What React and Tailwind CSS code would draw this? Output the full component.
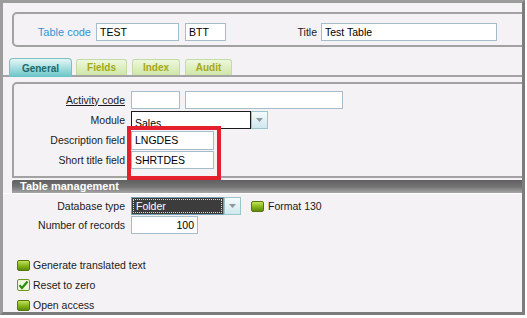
import React from "react";

const inputCls =
  "h-[18px] bg-white border border-[#a7bccb] px-[3px] flex items-center text-[10.5px] leading-none text-black";

function Field({ label, underline, children }) {
  return (
    <div className="flex items-center h-[18px]">
      <div className="w-[112px] pr-[1px] text-right leading-none">
        <span className={underline ? "underline" : ""}>{label}</span>
      </div>
      <div className="ml-[5px] flex items-center">{children}</div>
    </div>
  );
}

function GreenBox({ checked }) {
  if (checked) {
    return (
      <svg width="13" height="12" viewBox="0 0 13 12" className="shrink-0">
        <rect x="0.5" y="0.5" width="12" height="11" rx="1.5" fill="#eef6de" stroke="#6b9a1e" />
        <path d="M2.5 6.2 L5 9 L10.5 2.5" fill="none" stroke="#2f8a12" strokeWidth="2.2" />
      </svg>
    );
  }
  return (
    <div className="w-[13px] h-[11px] shrink-0 rounded-[2px] border border-[#56760e] bg-gradient-to-b from-[#c4e25a] via-[#8ab81e] to-[#5e8c0c]" />
  );
}

function DropButton() {
  return (
    <div className="w-[17px] h-[18px] border border-[#9cc4cc] bg-gradient-to-b from-[#f4fbfc] to-[#cfe8ee] flex items-center justify-center">
      <svg width="7" height="4" viewBox="0 0 7 4">
        <path d="M0 0 H7 L3.5 4 Z" fill="#8a9aa0" />
      </svg>
    </div>
  );
}

function Tab({ label, active }) {
  if (active) {
    return (
      <div className="w-[63px] h-[19px] -mb-[2px] rounded-t-[4px] border border-b-0 border-[#7cc0c4] bg-gradient-to-b from-[#e6f6f6] via-[#a6dede] to-[#66c4c6] flex items-center justify-center text-[10px] font-bold text-[#1c6a6c]">
        {label}
      </div>
    );
  }
  return (
    <div className="h-[16px] rounded-t-[3px] border border-b-0 border-[#c2dca6] bg-gradient-to-b from-[#eef7dc] to-[#cfe6a8] flex items-center justify-center text-[10px] font-bold text-[#a5a816]">
      {label}
    </div>
  );
}

export default function App() {
  return (
    <div className="w-[527px] h-[318px] bg-white font-['Liberation_Sans',Arial,sans-serif] text-[10.5px] text-[#1a1a1a]">
      <div className="relative w-[525px] h-[315px] border-[3px] border-[#9c9c9c] border-r-[#7c7c7c] border-b-[#7c7c7c] bg-[#f5f2f5] overflow-hidden flex flex-col">
        {/* header */}
        <div className="ml-[9px] mt-[9px] w-[540px] h-[35px] shrink-0 border-2 border-[#a2a2a2] rounded-l-[5px] flex items-start pt-[9px]">
          <div className="w-[77px] text-right text-[11px] text-[#2f95d2] leading-[18px]">Table code</div>
          <div className={`${inputCls} ml-[5px] w-[83px]`}>TEST</div>
          <div className={`${inputCls} ml-[6px] w-[41px]`}>BTT</div>
          <div className="w-[91px] text-right leading-[18px]">Title</div>
          <div className={`${inputCls} ml-[4px] w-[176px]`}>Test Table</div>
        </div>

        {/* tabs */}
        <div className="mt-[11px] h-[19px] shrink-0 flex items-end gap-[4px] pl-[6px] border-b-2 border-[#a4a4a4]">
          <Tab label="General" active />
          <div className="w-[51px]"><Tab label="Fields" /></div>
          <div className="w-[48px] ml-[1px]"><Tab label="Index" /></div>
          <div className="w-[47px] ml-[1px]"><Tab label="Audit" /></div>
        </div>

        {/* general panel */}
        <div className="ml-[9px] mt-[5px] w-[540px] h-[96px] shrink-0 border-2 border-[#a2a2a2] rounded-tl-[5px] pt-[7px] flex flex-col gap-[2px]">
          <Field label="Activity code" underline>
            <div className={`${inputCls} w-[49px]`} />
            <div className={`${inputCls} ml-[5px] w-[158px]`} />
          </Field>
          <Field label="Module">
            <div className="w-[120px] h-[18px] bg-white border border-[#1a1a1a] px-[3px] pt-[6px] overflow-hidden text-[10.5px] leading-none text-black">
              Sales
            </div>
            <DropButton />
          </Field>
          <Field label="Description field">
            <div className={`${inputCls} w-[83px] h-[19px]`}>LNGDES</div>
          </Field>
          <Field label="Short title field">
            <div className={`${inputCls} w-[83px]`}>SHRTDES</div>
          </Field>
        </div>

        {/* table management */}
        <div className="ml-[9px] mt-[2px] w-[540px] h-[13px] shrink-0 bg-gradient-to-b from-[#606060] via-[#727272] to-[#a6a6a6] rounded-tl-[2px] flex items-center pl-[8px] text-[11px] font-bold text-white leading-none">
          Table management
        </div>
        <div className="h-[1px] bg-white shrink-0" />

        <div className="mt-[3px] pl-[11px] flex flex-col gap-[1px]">
          <Field label="Database type">
            <div className="w-[93px] h-[18px] bg-[#3c3c3c] border border-[#7aa0b4] p-[1px]">
              <div className="h-full border border-dotted border-[#d8d8d8] flex items-center px-[2px] text-[10.5px] leading-none text-white">
                Folder
              </div>
            </div>
            <DropButton />
            <div className="ml-[10px] flex items-center gap-[4px]">
              <GreenBox />
              <span className="leading-none">Format 130</span>
            </div>
          </Field>
          <Field label="Number of records">
            <div className={`${inputCls} w-[67px] justify-end`}>100</div>
          </Field>
        </div>

        <div className="mt-[25px] ml-[14px] flex flex-col gap-[8px]">
          <div className="flex items-center gap-[3px] h-[12px]">
            <GreenBox />
            <span className="leading-none">Generate translated text</span>
          </div>
          <div className="flex items-center gap-[3px] h-[12px]">
            <GreenBox checked />
            <span className="leading-none">Reset to zero</span>
          </div>
          <div className="flex items-center gap-[3px] h-[12px]">
            <GreenBox />
            <span className="leading-none">Open access</span>
          </div>
        </div>

        {/* highlight annotation */}
        <div className="absolute left-[124px] top-[123px] w-[94px] h-[54px] border-4 border-[#e3202c]" />
      </div>
    </div>
  );
}
